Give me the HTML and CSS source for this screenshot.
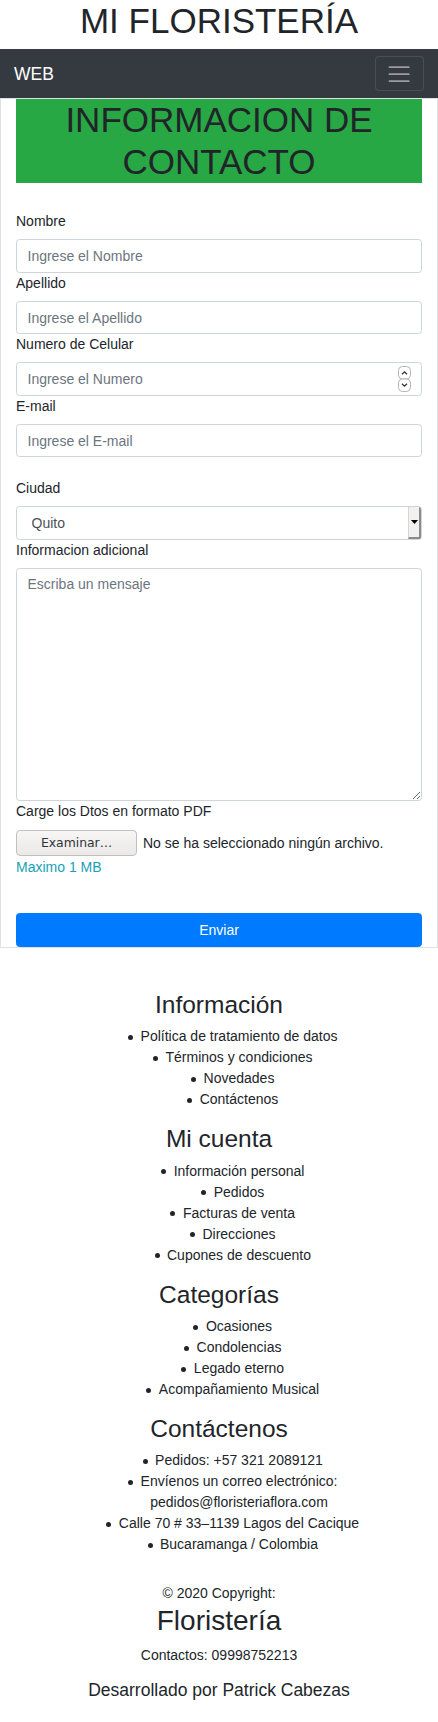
FILE: index.html
```html
<!DOCTYPE html>
<html lang="es">
<head>
<meta charset="utf-8">
<meta name="viewport" content="width=device-width, initial-scale=1">
<title>Mi Floristería - Contacto</title>
<link rel="stylesheet" href="styles.css">
</head>
<body>
<h1 class="site-title">MI FLORISTERÍA</h1>
<nav class="navbar">
  <a class="brand" href="#">WEB</a>
  <button class="toggler" type="button" aria-label="Menú">
    <svg viewBox="0 0 30 30" aria-hidden="true"><path d="M4 7h22M4 15h22M4 23h22" stroke="rgba(255,255,255,0.5)" stroke-width="2" stroke-linecap="round" fill="none"/></svg>
  </button>
</nav>
<main class="panel">
  <h1 class="banner">INFORMACION DE CONTACTO</h1>
  <form class="form">
    <label class="field-label" for="nombre">Nombre</label>
    <input class="control" id="nombre" type="text" placeholder="Ingrese el Nombre">
    <label class="field-label" for="apellido">Apellido</label>
    <input class="control" id="apellido" type="text" placeholder="Ingrese el Apellido">
    <label class="field-label" for="numero">Numero de Celular</label>
    <div class="control control-num">
      <input class="bare-input" id="numero" type="text" inputmode="numeric" placeholder="Ingrese el Numero">
      <svg class="spinner" viewBox="0 0 13 26" aria-hidden="true">
        <rect x="0.5" y="0.5" width="12" height="12.5" rx="4" fill="#fff" stroke="#b5b5b5"/>
        <rect x="0.5" y="13" width="12" height="12.5" rx="4" fill="#fff" stroke="#b5b5b5"/>
        <path d="M4 8.3 6.5 5.8 9 8.3" fill="none" stroke="#333" stroke-width="1.3"/>
        <path d="M4 17.7 6.5 20.2 9 17.7" fill="none" stroke="#333" stroke-width="1.3"/>
      </svg>
    </div>
    <label class="field-label" for="email">E-mail</label>
    <input class="control" id="email" type="email" placeholder="Ingrese el E-mail">
    <label class="field-label spaced" for="ciudad">Ciudad</label>
    <div class="select">
      <select class="bare-select" id="ciudad">
        <option>Quito</option>
        <option>Guayaquil</option>
        <option>Cuenca</option>
      </select>
      <span class="select-btn" aria-hidden="true"><svg viewBox="0 0 7 4"><path d="M0 0h7L3.5 4z" fill="#000"/></svg></span>
    </div>
    <label class="field-label" for="info">Informacion adicional</label>
    <textarea class="control control-area" id="info" placeholder="Escriba un mensaje"></textarea>
    <label class="field-label" for="archivo">Carge los Dtos en formato PDF</label>
    <div class="file-row">
      <label class="file-btn" for="archivo">Examinar…</label>
      <input class="file-hidden" id="archivo" type="file" accept="application/pdf">
      <span class="file-name">No se ha seleccionado ningún archivo.</span>
    </div>
    <small class="hint">Maximo 1 MB</small>
    <button class="submit" type="submit">Enviar</button>
  </form>
</main>
<footer class="footer">
  <section class="footer-col">
    <h3 class="footer-title">Información</h3>
    <ul class="footer-list">
      <li>Política de tratamiento de datos</li>
      <li>Términos y condiciones</li>
      <li>Novedades</li>
      <li>Contáctenos</li>
    </ul>
  </section>
  <section class="footer-col">
    <h3 class="footer-title">Mi cuenta</h3>
    <ul class="footer-list">
      <li>Información personal</li>
      <li>Pedidos</li>
      <li>Facturas de venta</li>
      <li>Direcciones</li>
      <li>Cupones de descuento</li>
    </ul>
  </section>
  <section class="footer-col">
    <h3 class="footer-title">Categorías</h3>
    <ul class="footer-list">
      <li>Ocasiones</li>
      <li>Condolencias</li>
      <li>Legado eterno</li>
      <li>Acompañamiento Musical</li>
    </ul>
  </section>
  <section class="footer-col">
    <h3 class="footer-title">Contáctenos</h3>
    <ul class="footer-list">
      <li>Pedidos: +57 321 2089121</li>
      <li>Envíenos un correo electrónico: pedidos@floristeriaflora.com</li>
      <li>Calle 70 # 33–1139 Lagos del Cacique</li>
      <li>Bucaramanga / Colombia</li>
    </ul>
  </section>
  <div class="copyright">
    <p class="copy-line">© 2020 Copyright:</p>
    <h2 class="copy-brand">Floristería</h2>
    <p class="copy-contact">Contactos: 09998752213</p>
    <h5 class="copy-dev">Desarrollado por Patrick Cabezas</h5>
  </div>
</footer>
</body>
</html>
```
FILE: styles.css
```css
html {
  font-size: 14px;
}

body {
  margin: 0;
  font-family: "Liberation Sans", Arial, sans-serif;
  font-size: 1rem;
  line-height: 1.5;
  color: #212529;
  background: #fff;
}

.site-title {
  margin: 0 0 .5rem;
  font-size: 2.5rem;
  font-weight: 400;
  line-height: 1.2;
  text-align: center;
}

.navbar {
  display: flex;
  align-items: center;
  justify-content: space-between;
  padding: .5rem 1rem;
  background: #343a40;
}

.brand {
  color: #fff;
  font-size: 1.25rem;
  line-height: 1.5;
  padding: .3125rem 0;
  text-decoration: none;
}

.toggler {
  display: flex;
  padding: .25rem .75rem;
  margin: 0;
  background: transparent;
  border: 1px solid rgba(255, 255, 255, .1);
  border-radius: .25rem;
  font-size: 1.25rem;
  line-height: 1;
}

.toggler svg {
  display: block;
  width: 1.5em;
  height: 1.5em;
}

.panel {
  border: 1px solid #dee2e6;
  padding: 0 15px;
}

.banner {
  margin: 0 0 2rem;
  background: #28a745;
  font-size: 2.5rem;
  font-weight: 400;
  line-height: 1.2;
  text-align: center;
}

.form {
  margin: 0;
}

.field-label {
  display: block;
  margin-bottom: .5rem;
}

.field-label.spaced {
  margin-top: 1.5rem;
}

.control {
  display: block;
  box-sizing: border-box;
  width: 100%;
  height: calc(1.5em + .75rem + 2px);
  margin: 0;
  padding: .375rem .75rem;
  font-family: inherit;
  font-size: 1rem;
  line-height: 1.5;
  color: #495057;
  background: #fff;
  border: 1px solid #ced4da;
  border-radius: .25rem;
}

.control::placeholder,
.bare-input::placeholder {
  color: #6c757d;
  opacity: 1;
}

.control-num {
  display: flex;
  align-items: center;
  gap: 6px;
}

.bare-input {
  flex: 1;
  min-width: 0;
  margin: 0;
  padding: 0;
  border: 0;
  outline: none;
  background: transparent;
  font-family: inherit;
  font-size: 1rem;
  line-height: 1.5;
  color: #495057;
}

.spinner {
  display: block;
  width: 13px;
  height: 26px;
  flex: none;
}

.select {
  display: flex;
  box-sizing: border-box;
  height: calc(1.5em + .75rem + 2px);
  border: 1px solid #ced4da;
  border-radius: .25rem;
  overflow: hidden;
  background: #fff;
}

.bare-select {
  flex: 1;
  min-width: 0;
  margin: 0;
  padding: 0 0 0 14.5px;
  border: 0;
  outline: none;
  background: transparent;
  -webkit-appearance: none;
  appearance: none;
  font-family: inherit;
  font-size: 1rem;
  line-height: 1.5;
  color: #495057;
}

.select-btn {
  display: flex;
  align-items: center;
  justify-content: center;
  box-sizing: border-box;
  width: 13px;
  background: #f2f1f0;
  border-left: 1px solid #d6d6d6;
  border-right: 2px solid #8c8c8c;
  border-bottom: 2px solid #8c8c8c;
}

.select-btn svg {
  display: block;
  width: 7px;
  height: 4px;
}

.control-area {
  height: 233.5px;
  resize: vertical;
}

.file-row {
  display: flex;
  align-items: center;
  gap: 6px;
  height: 28px;
}

.file-btn {
  display: flex;
  align-items: center;
  justify-content: center;
  box-sizing: border-box;
  width: 121px;
  height: 26px;
  border: 1px solid #c3c0bb;
  border-radius: 4px;
  background: linear-gradient(#f7f6f5, #ebe9e7);
  font-family: "DejaVu Sans", sans-serif;
  font-size: 12.4px;
  color: #2e3436;
  cursor: pointer;
}

.file-hidden {
  display: none;
}

.file-name {
  white-space: nowrap;
}

.hint {
  display: block;
  font-size: 1rem;
  color: #17a2b8;
}

.submit {
  display: block;
  width: 100%;
  margin: 35px 0 0;
  padding: .375rem .75rem;
  font-family: inherit;
  font-size: 1rem;
  line-height: 1.5;
  color: #fff;
  background: #007bff;
  border: 1px solid #007bff;
  border-radius: .25rem;
}

.footer {
  padding-top: 42px;
}

.footer-col {
  padding: 0 15px;
}

.footer-title {
  margin: 0 0 .5rem;
  font-size: 1.75rem;
  font-weight: 400;
  line-height: 1.2;
  text-align: center;
}

.footer-list {
  margin: 0 0 1rem;
  padding-left: 40px;
  text-align: center;
  list-style: none;
}

.footer-list li::before {
  content: "";
  display: inline-block;
  width: 5px;
  height: 5px;
  margin-left: -12.5px;
  margin-right: 7.5px;
  border-radius: 50%;
  background: #212529;
  vertical-align: middle;
}

.copyright {
  padding-top: 14px;
  text-align: center;
}

.copy-line {
  margin: 0;
}

.copy-brand {
  margin: 0 0 .5rem;
  font-size: 2rem;
  font-weight: 400;
  line-height: 1.2;
}

.copy-contact {
  margin: 0 0 1rem;
}

.copy-dev {
  margin: 0;
  font-size: 1.25rem;
  font-weight: 400;
  line-height: 1.2;
}
```
